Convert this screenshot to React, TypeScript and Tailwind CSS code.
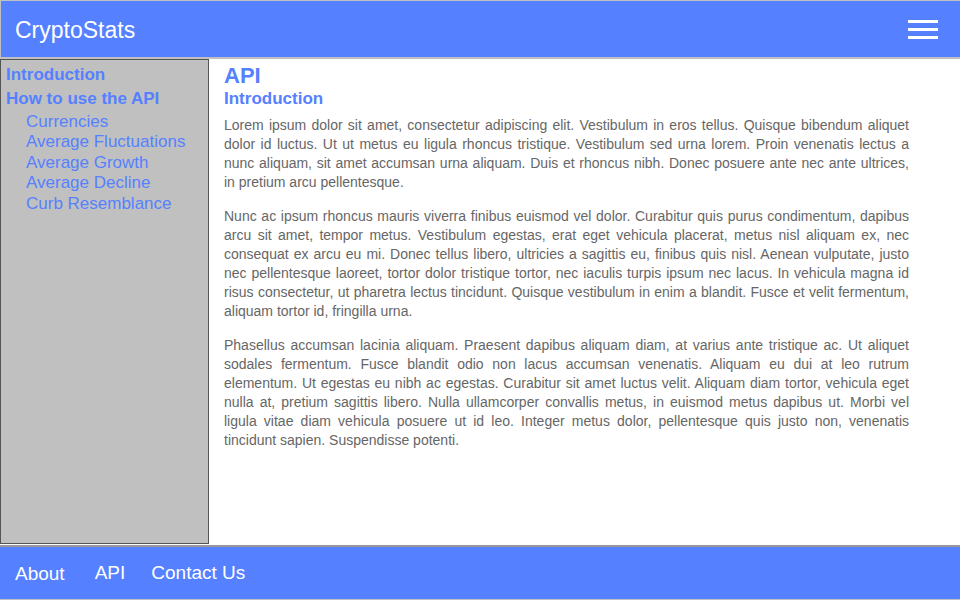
const paragraphs = [
  'Lorem ipsum dolor sit amet, consectetur adipiscing elit. Vestibulum in eros tellus. Quisque bibendum aliquet dolor id luctus. Ut ut metus eu ligula rhoncus tristique. Vestibulum sed urna lorem. Proin venenatis lectus a nunc aliquam, sit amet accumsan urna aliquam. Duis et rhoncus nibh. Donec posuere ante nec ante ultrices, in pretium arcu pellentesque.',
  'Nunc ac ipsum rhoncus mauris viverra finibus euismod vel dolor. Curabitur quis purus condimentum, dapibus arcu sit amet, tempor metus. Vestibulum egestas, erat eget vehicula placerat, metus nisl aliquam ex, nec consequat ex arcu eu mi. Donec tellus libero, ultricies a sagittis eu, finibus quis nisl. Aenean vulputate, justo nec pellentesque laoreet, tortor dolor tristique tortor, nec iaculis turpis ipsum nec lacus. In vehicula magna id risus consectetur, ut pharetra lectus tincidunt. Quisque vestibulum in enim a blandit. Fusce et velit fermentum, aliquam tortor id, fringilla urna.',
  'Phasellus accumsan lacinia aliquam. Praesent dapibus aliquam diam, at varius ante tristique ac. Ut aliquet sodales fermentum. Fusce blandit odio non lacus accumsan venenatis. Aliquam eu dui at leo rutrum elementum. Ut egestas eu nibh ac egestas. Curabitur sit amet luctus velit. Aliquam diam tortor, vehicula eget nulla at, pretium sagittis libero. Nulla ullamcorper convallis metus, in euismod metus dapibus ut. Morbi vel ligula vitae diam vehicula posuere ut id leo. Integer metus dolor, pellentesque quis justo non, venenatis tincidunt sapien. Suspendisse potenti.',
];

const subLinks = ['Currencies', 'Average Fluctuations', 'Average Growth', 'Average Decline', 'Curb Resemblance'];

export default function App() {
  return (
    <div className="h-[600px] flex flex-col bg-white font-['Liberation_Sans',Arial,sans-serif]">
      <header className="h-[59px] shrink-0 flex items-center justify-between bg-[#5580ff] border-t border-l border-b-2 border-[#c0c0c0] pl-[14px] pr-[22px]">
        <span className="text-[23px] text-white mt-[2px]">CryptoStats</span>
        <div className="flex flex-col gap-[5px] w-[30px] mt-px">
          <span className="h-[3px] bg-white" />
          <span className="h-[3px] bg-white" />
          <span className="h-[3px] bg-white" />
        </div>
      </header>

      <div className="flex flex-1 min-h-0 mb-px">
        <nav className="w-[209px] shrink-0 bg-[#c0c0c0] border border-[#555] pl-[5px] pt-[3px] text-[#5580ff]">
          <div className="text-[17px] font-bold leading-[24px]">Introduction</div>
          <div className="text-[17px] font-bold leading-[24px]">How to use the API</div>
          <ul className="pl-[20px] pt-px text-[17px] leading-[20.4px]">
            {subLinks.map((l) => (
              <li key={l}>{l}</li>
            ))}
          </ul>
        </nav>

        <main className="flex-1 pl-[15px] pr-[51px] pt-[3px]">
          <h1 className="text-[22px] font-bold text-[#5580ff] leading-[27px]">API</h1>
          <h2 className="text-[17px] font-bold text-[#5580ff] leading-[20px]">Introduction</h2>
          <div className="mt-[7px] flex flex-col gap-[15px]">
            {paragraphs.map((p, i) => (
              <p key={i} className="text-[14px] leading-[19px] text-[#666] text-justify">
                {p}
              </p>
            ))}
          </div>
        </main>
      </div>

      <footer className="h-[55px] shrink-0 flex items-center gap-[30px] bg-[#5580ff] border-t-2 border-[#999] border-b border-b-[#c0c0c0] pl-[15px] text-[19px] text-white">
        <span className="mt-[3px]">About</span>
        <span>API</span>
        <span className="-ml-[4px]">Contact Us</span>
      </footer>
    </div>
  );
}
